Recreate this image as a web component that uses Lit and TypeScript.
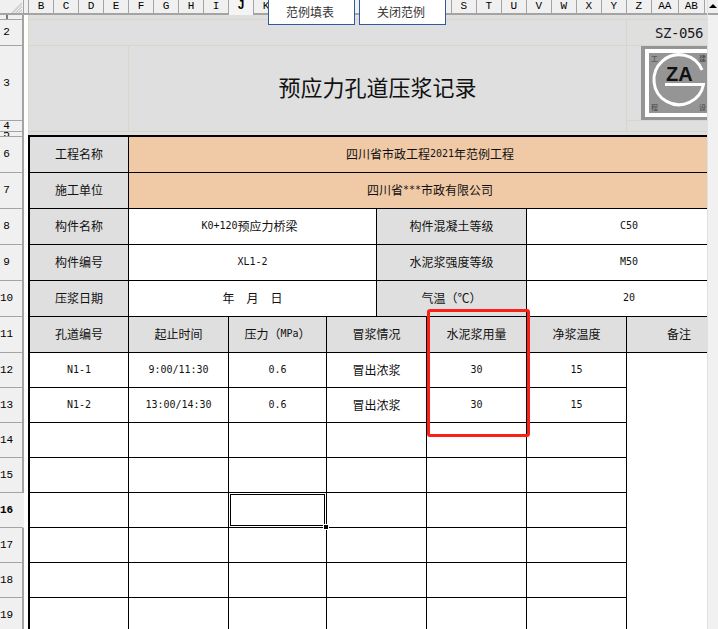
import { LitElement, html, css, nothing } from "lit";
import { customElement } from "lit/decorators.js";

type Cell = { t?: string; span?: number; rows?: number; kind?: string };

const letters = ["B", "C", "D", "E", "F", "G", "H", "I", "J", "K", "L", "M", "N", "O", "P", "Q", "R", "S", "T", "U", "V", "W", "X", "Y", "Z", "AA", "AB"];
const rowHeads: [string, number][] = [
  ["1", 5], ["2", 26], ["3", 75], ["4", 11], ["5", 5],
  ["6", 36], ["7", 36], ["8", 36], ["9", 36], ["10", 36], ["11", 36],
  ["12", 35], ["13", 35], ["14", 35], ["15", 35], ["16", 35], ["17", 35], ["18", 35], ["19", 35],
];

const label = (t: string, span = 1): Cell => ({ t, span, kind: "label" });
const val = (t: string, span = 1): Cell => ({ t, span });
const orange = (t: string): Cell => ({ t, span: 7, kind: "orange end" });

const blankRow = (cur = false): Cell[] => [
  val(""), val(""), { kind: cur ? "active" : "" }, val("", 2), val(""), val(""),
];

const cells: Cell[] = [
  label("工程名称"), orange("四川省市政工程2021年范例工程"),
  label("施工单位"), orange("四川省***市政有限公司"),
  label("构件名称"), val("K0+120预应力桥梁\u00a0", 3), label("构件混凝土等级", 2), { t: "C50", span: 2, kind: "end" },
  label("构件编号"), val("XL1-2", 3), label("水泥浆强度等级", 2), { t: "M50", span: 2, kind: "end" },
  label("压浆日期"), val("年　月　日", 3), label("气温（℃）", 2), { t: "20", span: 2, kind: "end" },
  label("孔道编号"), label("起止时间"), label("压力（MPa）"), label("冒浆情况", 2), label("水泥浆用量"), label("净浆温度"), { t: "备注", kind: "label end" },
  val("N1-1"), val("9:00/11:30"), val("0.6", 1), val("冒出浓浆", 2), val("30"), val("15"), { rows: 8, kind: "end" },
  val("N1-2"), val("13:00/14:30"), val("0.6", 1), val("冒出浓浆", 2), val("30"), val("15"),
  ...blankRow(), ...blankRow(), ...blankRow(true), ...blankRow(), ...blankRow(), ...blankRow(),
];

@customElement("app-root")
export class AppRoot extends LitElement {
  static styles = css`
    :host {
      display: block;
    }
    .app {
      position: relative;
      width: 718px;
      height: 629px;
      overflow: hidden;
      display: grid;
      grid-template-columns: 24px 683px 11px;
      grid-template-rows: 15px 1fr;
      background: #fff;
      color: #111;
      font: 12px "Noto Sans CJK SC", sans-serif;
    }
    .corner {
      background: #f0f0f0;
      border-right: 1px solid #a4a4a4;
      border-bottom: 2px solid #a4a4a4;
      box-sizing: border-box;
      display: flex;
      justify-content: flex-end;
      align-items: flex-end;
    }
    .corner svg {
      display: block;
    }
    .cols {
      display: flex;
      background: #f0f0f0;
      border-bottom: 2px solid #a4a4a4;
      box-sizing: border-box;
      height: 15px;
    }
    .col {
      flex: none;
      box-sizing: border-box;
      height: 13px;
      border-right: 1px solid #a4a4a4;
      text-align: center;
      font: 11px/13px "Liberation Mono", monospace;
      color: #000;
    }
    .col.on {
      font-weight: bold;
      font-size: 12px;
      height: 15px;
      background: #f4f4f4;
    }
    .scroll {
      grid-row: 1 / 3;
      grid-column: 3;
      background: #f1f1f1;
      border-left: 1px solid #e0e0e0;
      box-sizing: border-box;
    }
    .scroll .up {
      height: 15px;
      box-sizing: border-box;
      border-bottom: 2px solid #a4a4a4;
      background: #f0f0f0;
      display: flex;
      justify-content: center;
      padding-top: 4px;
    }
    .scroll svg {
      display: block;
    }
    .rows {
      background: #f0f0f0;
      overflow: hidden;
    }
    .row {
      box-sizing: border-box;
      width: 24px;
      border-right: 2px solid #a4a4a4;
      border-bottom: 1px solid #a4a4a4;
      overflow: hidden;
      display: flex;
      align-items: center;
      font: 11px/11px "Liberation Mono", monospace;
      color: #000;
    }
    .row span {
      width: 13px;
      text-align: center;
      flex: none;
    }
    .row.on {
      font-weight: bold;
      border-right-color: #f0f0f0;
    }
    .sheet {
      overflow: hidden;
      background: #fff;
      display: flex;
      flex-direction: column;
      width: 683px;
    }
    .top {
      flex: none;
      margin-left: 4px;
      width: 679px;
      box-sizing: border-box;
      border-left: 1px solid #d8d5ca;
      background: #dfdfdf;
      display: grid;
      grid-template-columns: 100px 498px 104px;
      grid-template-rows: 5px 26px 75px 11px 3px;
      overflow: hidden;
    }
    .top > div {
      box-sizing: border-box;
      border-bottom: 1px solid #d8d5ca;
    }
    .top .v {
      border-right: 1px solid #d8d5ca;
    }
    .band {
      grid-column: 1 / 4;
    }
    .wide {
      grid-column: 1 / 3;
    }
    .code {
      display: flex;
      align-items: center;
      justify-content: center;
      color: #1a1a1a;
      font: 14px "DejaVu Sans Mono", monospace;
      letter-spacing: -0.43px;
    }
    .blank {
      grid-row: span 2;
    }
    .title {
      grid-row: span 2;
      display: flex;
      align-items: center;
      justify-content: center;
      font-size: 22px;
      color: #111;
      padding-bottom: 5px;
    }
    .logo {
      padding-left: 14px;
    }
    .logo svg {
      display: block;
    }
    .rest {
      grid-column: 1 / 4;
      border-bottom: none !important;
    }
    .table {
      flex: none;
      margin-left: 4px;
      width: 706px;
      box-sizing: border-box;
      border-left: 2px solid #000;
      border-top: 2px solid #000;
      display: grid;
      grid-template-columns: 99px 100px 98px 50px 50px 100px 100px 104px;
      grid-template-rows: repeat(6, 36px);
      grid-auto-rows: 35px;
    }
    .c {
      box-sizing: border-box;
      border-right: 1px solid #000;
      border-bottom: 1px solid #000;
      padding-bottom: 2px;
      display: flex;
      align-items: center;
      justify-content: center;
      white-space: pre;
      position: relative;
    }
    .l {
      font: 10px "DejaVu Sans Mono", monospace;
    }
    .label {
      background: #dfdfdf;
    }
    .orange {
      background: #f0c9a6;
    }
    .end {
      border-right: none;
    }
    .active {
      box-shadow: inset 0 0 0 1px #fff, inset 0 0 0 2px #000;
    }
    .active::after {
      content: "";
      position: absolute;
      right: -3px;
      bottom: -3px;
      width: 4px;
      height: 4px;
      background: #000;
      border: 1px solid #fff;
      z-index: 1;
    }
    .fake {
      position: absolute;
      top: -1px;
      height: 26px;
      width: 87px;
      box-sizing: border-box;
      border: 1px solid #2f5a9e;
      background: #fff;
      color: #333;
      padding: 0 3px 1px 0;
      font: 12px "Noto Sans CJK SC", sans-serif;
    }
    .mark {
      position: absolute;
      left: 427px;
      top: 309px;
      width: 103px;
      height: 128px;
      box-sizing: border-box;
      border: 3px solid #fb2016;
      border-radius: 3px;
    }
  `;

  // half-width runs are drawn narrower than the CJK, 6px a character
  text(s: string) {
    return s.split(/([\x20-\x7e\u00a0]+)/).map((part) =>
      /^[\x20-\x7e\u00a0]+$/.test(part) ? html`<span class="l">${part}</span>` : part
    );
  }

  colWidth(name: string) {
    if ("LMNOPQR".includes(name)) return 24.7;
    if (name === "AA") return 27;
    if (name === "AB") return 26;
    return 25;
  }

  render() {
    return html`
      <div class="app">
        <div class="corner">
          <svg width="12" height="12" viewBox="0 0 12 12">
            <path d="M0 12 11 1 11 12Z" fill="#cfcfcf" />
            <path d="M3 12 11 4M6 12 11 7M9 12 11 10" stroke="#f4f4f4" stroke-width="1" />
          </svg>
        </div>
        <div class="cols">
          <div class="col" style="width:5px"></div>
          ${letters.map(
            (c) => html`<div class="col ${c === "J" ? "on" : ""}" style="width:${this.colWidth(c)}px">${"LMNOPQR".includes(c) ? "" : c}</div>`
          )}
        </div>
        <div class="scroll">
          <div class="up">
            <svg width="8" height="4" viewBox="0 0 8 4"><path d="M4 0 8 4H0Z" fill="#000" /></svg>
          </div>
        </div>
        <div class="rows">
          ${rowHeads.map(
            ([n, h]) => html`<div class="row ${n === "16" ? "on" : ""}" style="height:${h}px"><span>${n}</span></div>`
          )}
        </div>
        <div class="sheet">
          <div class="top">
            <div class="band"></div>
            <div class="wide v"></div>
            <div class="code">SZ-056</div>
            <div class="blank v"></div>
            <div class="title v">预应力孔道压浆记录</div>
            <div class="logo">
              <svg width="66" height="74" viewBox="0 0 66 74">
                <rect width="66" height="74" fill="#959595" />
                <rect x="6" y="5" width="70" height="64" fill="none" stroke="#fff" stroke-width="4" />
                <path d="M61 24A25 25 0 1 0 62.5 38.5H24" fill="none" stroke="#fff" stroke-width="3" />
                <text x="25" y="35" font-family="Liberation Sans" font-weight="bold" font-size="20" fill="#111">ZA</text>
                <g font-family="Noto Sans CJK SC" font-size="7" fill="#444">
                  <text x="10" y="15">工</text>
                  <text x="58" y="15">建</text>
                  <text x="10" y="64">程</text>
                  <text x="58" y="64">设</text>
                </g>
              </svg>
            </div>
            <div></div>
            <div class="rest"></div>
          </div>
          <div class="table">
            ${cells.map(
              (c) => html`<div
                class="c ${c.kind ?? ""}"
                style="${c.span && c.span > 1 ? `grid-column:span ${c.span};` : ""}${c.rows ? `grid-row:span ${c.rows};` : ""}"
              >${c.t ? this.text(c.t) : nothing}</div>`
            )}
          </div>
        </div>
        <button class="fake" style="left:268px">范例填表</button>
        <button class="fake" style="left:359px">关闭范例</button>
        <div class="mark"></div>
      </div>
    `;
  }
}
